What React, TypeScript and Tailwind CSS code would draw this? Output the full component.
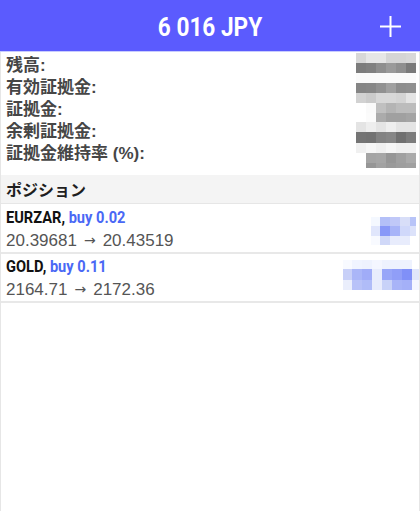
import React from "react";

const g = (v: string) => `#${v}${v}${v}`;

const grayRows: string[][] = [
  ["d8", "e6", "e6", "d5", "d5", "d8"],
  ["7c", "80", "8e", "9a", "8f", "7a"],
  ["fa", "fa", "fa", "fa", "fa", "fa"],
  ["85", "87", "91", "a0", "8d", "8f"],
  ["d2", "cb", "d8", "d8", "d4", "e4"],
  ["ff", "fa", "c0", "b4", "bc", "bc"],
  ["ff", "fb", "ab", "a0", "a0", "a4"],
  ["e4", "ee", "e4", "ee", "e4", "e4"],
  ["74", "72", "82", "86", "70", "7c"],
  ["f0", "f6", "f0", "f6", "f0", "f0"],
  ["ff", "a4", "a6", "96", "a0", "aa"],
  ["ff", "96", "a2", "9a", "9e", "a0"],
];
const grayHeights = [10, 10, 10, 10, 10, 10, 9, 10, 11, 10, 10, 5];

const blue1: string[][] = [
  ["#f4f8ff", "#b4c0f8", "#c0c8f8", "#d8def8", "#b8c4f8"],
  ["#e0e6fc", "#8898f8", "#a8b4f8", "#d0d8fa", "#dce2fa"],
  ["#f8faff", "#d0d8f8", "#e8ecfc", "#e8ecfc", "#ffffff"],
];
const blue1W = [9, 10, 10, 10, 6];
const blue1H = [9, 10, 9];

const blue2: string[][] = [
  ["#f8faff", "#f0f4ff", "#eef2fe", "#f4f6ff", "#eef2fe", "#eef2fe", "#eef2fe", "#ffffff"],
  ["#c8d0f8", "#aab6f8", "#a0acf8", "#e8ecfc", "#98a6f8", "#909ef8", "#8090f8", "#e0e6fa"],
  ["#eaeefc", "#b8c2f8", "#b0bcf8", "#e8ecfc", "#c8d2f8", "#a8b4f8", "#a4b0f8", "#f4f6ff"],
];
const blue2W = [9, 10, 10, 10, 10, 10, 10, 7];
const blue2H = [9, 11, 10];

function Mosaic({ rows, widths, heights }: { rows: string[][]; widths: number[]; heights: number[] }) {
  return (
    <div className="flex flex-col">
      {rows.map((r, i) => (
        <div key={i} className="flex" style={{ height: heights[i] }}>
          {r.map((c, j) => (
            <div key={j} style={{ width: widths[j], backgroundColor: c }} />
          ))}
        </div>
      ))}
    </div>
  );
}

const labels = ["残高:", "有効証拠金:", "証拠金:", "余剰証拠金:", "証拠金維持率 (%):"];

function Title({ sym, qty }: { sym: string; qty: string }) {
  return (
    <div className="h-[23px] flex items-center">
      <div className="origin-left scale-x-[0.86] whitespace-nowrap text-[17px] font-bold" style={{ fontFamily: "Roboto, sans-serif" }}>
        <span className="text-[#111]">{sym},</span>
        <span className="text-[#4a68f5]"> {qty}</span>
      </div>
    </div>
  );
}

function Prices({ a, b }: { a: string; b: string }) {
  return (
    <div className="h-[23px] flex items-center text-[17px] text-[#555] whitespace-nowrap">
      <span>{a}</span>
      <span className="mx-[7px] text-[14px]" style={{ fontFamily: "'DejaVu Sans', sans-serif" }}>→</span>
      <span>{b}</span>
    </div>
  );
}

export default function App() {
  return (
    <div className="w-[420px] h-[511px] bg-white flex flex-col overflow-hidden" style={{ fontFamily: "'Liberation Sans', 'Noto Sans CJK JP', sans-serif" }}>
      <div className="h-[52px] shrink-0 bg-[#5b5bfe] border-b border-[#c8ccff] flex items-center justify-center relative">
        <div className="pt-[3px] text-white text-[26px] font-bold scale-x-[0.87] whitespace-nowrap" style={{ fontFamily: "Roboto, sans-serif" }}>
          6 016 JPY
        </div>
        <svg className="absolute right-[19px] top-[16px]" width="21" height="21" viewBox="0 0 21 21">
          <path d="M10.5 0v21M0 10.5h21" stroke="white" strokeWidth="2" />
        </svg>
      </div>
      <div className="flex-1 border-x border-[#e6e6e6] flex flex-col">
        <div className="h-[123px] flex justify-between pl-[5px] pr-[3px]">
          <div className="pt-[3px] flex flex-col text-[17px] leading-[22px] font-bold text-[#464646]" style={{ fontFamily: "'Liberation Sans', 'Noto Sans CJK JP', sans-serif" }}>
            {labels.map((l) => (
              <div key={l} className="h-[22px]">{l}</div>
            ))}
          </div>
          <div className="pt-px flex flex-col">
            {grayRows.map((r, i) => (
              <div key={i} className="flex" style={{ height: grayHeights[i] }}>
                {r.map((c, j) => (
                  <div key={j} className="w-[10px]" style={{ backgroundColor: g(c) }} />
                ))}
              </div>
            ))}
          </div>
        </div>
        <div className="h-[29px] bg-[#f4f4f4] border-b border-[#e6e6e6] flex items-center pl-[5px] text-[16px] font-bold text-[#1e1e1e]" style={{ fontFamily: "'Noto Sans CJK JP', sans-serif" }}>
          ポジション
        </div>
        <div className="flex justify-between border-b-2 border-[#e8e8e8] pl-[5px] pr-[3px] pt-[2px]">
          <div className="flex flex-col">
            <Title sym="EURZAR" qty="buy 0.02" />
            <Prices a="20.39681" b="20.43519" />
          </div>
          <div className="mt-[11px]">
            <Mosaic rows={blue1} widths={blue1W} heights={blue1H} />
          </div>
        </div>
        <div className="flex justify-between border-b-2 border-[#e8e8e8] pl-[5px] pt-[1px]">
          <div className="flex flex-col">
            <Title sym="GOLD" qty="buy 0.11" />
            <Prices a="2164.71" b="2172.36" />
          </div>
          <div className="mt-[5px]">
            <Mosaic rows={blue2} widths={blue2W} heights={blue2H} />
          </div>
        </div>
      </div>
    </div>
  );
}
